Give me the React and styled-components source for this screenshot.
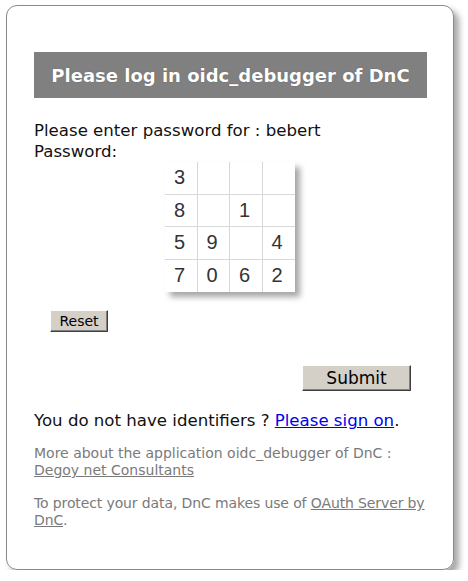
import React from 'react';
import styled, { createGlobalStyle } from 'styled-components';

const GlobalStyle = createGlobalStyle`
  html, body {
    margin: 0;
    padding: 0;
    background: #fff;
  }
`;

const Card = styled.div`
  box-sizing: border-box;
  margin: 5px 0 0 6px;
  width: 448px;
  height: 565px;
  border: 1px solid #8a8a8a;
  border-radius: 11px;
  box-shadow: 5px 5px 6px rgba(0, 0, 0, 0.35);
  padding: 46px 20px 0 27px;
  font-family: "DejaVu Sans", sans-serif;
  color: #111;
`;

const Title = styled.h1`
  margin: 0 6px 0 0;
  height: 46px;
  background: #808080;
  color: #fff;
  font-size: 18px;
  font-weight: bold;
  display: flex;
  align-items: center;
  justify-content: center;
  text-shadow: 0 0 1px rgba(0, 0, 0, 0.4);
`;

const Line = styled.div`
  font-size: 16.6px;
  line-height: 21px;
  margin-top: ${props => props.$top || 0}px;
`;

const PadWrap = styled.div`
  display: flex;
  padding-left: 131px;
`;

const Pad = styled.div`
  display: grid;
  grid-template-columns: repeat(4, 32.5px);
  grid-template-rows: repeat(4, 32.5px);
  background: #fff;
  box-shadow: 5px 5px 6px rgba(0, 0, 0, 0.35);
`;

const Cell = styled.div`
  box-sizing: border-box;
  font-family: Arial, "Liberation Sans", sans-serif;
  font-size: 20px;
  color: #333;
  padding-left: 9px;
  display: flex;
  align-items: center;
  border-right: ${props => (props.$lastCol ? 'none' : '1px solid #d8d8d8')};
  border-bottom: ${props => (props.$lastRow ? 'none' : '1px solid #d8d8d8')};
`;

const ClassicButton = styled.button`
  font-family: Tahoma, "DejaVu Sans", sans-serif;
  background: #d4d0c8;
  color: #000;
  border: 1px solid;
  border-color: #fff #404040 #404040 #fff;
  box-shadow: inset -1px -1px 0 #808080;
  padding: 0;
  font-size: ${props => props.$size}px;
  width: ${props => props.$w}px;
  height: ${props => props.$h}px;
`;

const ResetRow = styled.div`
  padding-left: 16px;
  margin-top: 18px;
`;

const SubmitRow = styled.div`
  display: flex;
  justify-content: flex-end;
  padding-right: 22px;
  margin-top: 33px;
`;

const Link = styled.a`
  color: #0000ee;
  text-decoration: underline;
`;

const Note = styled.p`
  margin: ${props => props.$top}px 0 0;
  font-size: 14px;
  line-height: 17px;
  color: #7a7a7a;
  letter-spacing: ${props => (props.$tight ? '-0.12px' : '0')};
`;

const NoteLink = styled.a`
  color: #7a7a7a;
  text-decoration: underline;
`;

const digits = [
  ['3', '', '', ''],
  ['8', '', '1', ''],
  ['5', '9', '', '4'],
  ['7', '0', '6', '2'],
];

export default function App() {
  return (
    <>
      <GlobalStyle />
      <Card>
        <Title>Please log in oidc_debugger of DnC</Title>
        <Line $top={22}>Please enter password for : bebert</Line>
        <Line>Password:</Line>
        <PadWrap>
          <Pad>
            {digits.map((row, r) =>
              row.map((d, c) => (
                <Cell key={`${r}-${c}`} $lastCol={c === 3} $lastRow={r === 3}>
                  {d}
                </Cell>
              ))
            )}
          </Pad>
        </PadWrap>
        <ResetRow>
          <ClassicButton $size={14} $w={58} $h={22}>Reset</ClassicButton>
        </ResetRow>
        <SubmitRow>
          <ClassicButton $size={17} $w={109} $h={26}>Submit</ClassicButton>
        </SubmitRow>
        <Line $top={19}>
          You do not have identifiers ? <Link href="#">Please sign on</Link>.
        </Line>
        <Note $top={14}>
          More about the application oidc_debugger of DnC :<br />
          <NoteLink href="#">Degoy net Consultants</NoteLink>
        </Note>
        <Note $top={16} $tight>
          To protect your data, DnC makes use of{' '}
          <NoteLink href="#">
            OAuth Server by
            <br />
            DnC
          </NoteLink>
          .
        </Note>
      </Card>
    </>
  );
}
